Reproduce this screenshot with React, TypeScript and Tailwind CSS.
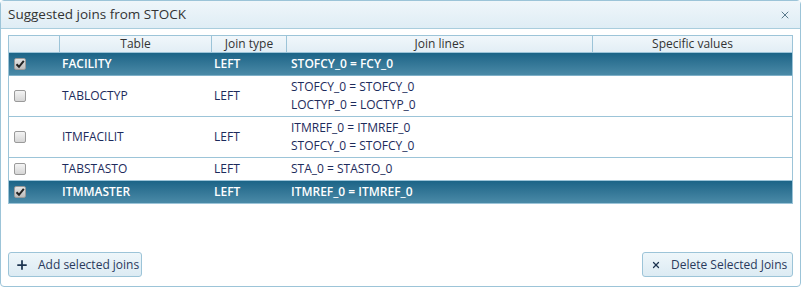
import { Plus, X } from "lucide-react";

type JoinRow = {
	table: string;
	type: string;
	lines: string[];
	selected: boolean;
};

const rows: JoinRow[] = [
	{ table: "FACILITY", type: "LEFT", lines: ["STOFCY_0 = FCY_0"], selected: true },
	{ table: "TABLOCTYP", type: "LEFT", lines: ["STOFCY_0 = STOFCY_0", "LOCTYP_0 = LOCTYP_0"], selected: false },
	{ table: "ITMFACILIT", type: "LEFT", lines: ["ITMREF_0 = ITMREF_0", "STOFCY_0 = STOFCY_0"], selected: false },
	{ table: "TABSTASTO", type: "LEFT", lines: ["STA_0 = STASTO_0"], selected: false },
	{ table: "ITMMASTER", type: "LEFT", lines: ["ITMREF_0 = ITMREF_0"], selected: true }
];

const cols = "grid grid-cols-[51px_152px_75px_306px_1fr]";

function CheckBox({ checked }: { checked: boolean }) {
	return (
		<span
			className={`grid h-3 w-3 place-items-center rounded-[2px] border border-[#9a9a9a] bg-gradient-to-b ${
				checked ? "from-[#e4e4e4] to-[#bdbdbd]" : "from-[#f4f4f4] to-[#d6d6d6]"
			}`}
		>
			{checked ? (
				<svg viewBox="0 0 10 10" className="h-2.5 w-2.5" aria-hidden="true">
					<path d="M1.5 5.2 L4 7.8 L8.8 1.8" fill="none" stroke="#222" strokeWidth="2" />
				</svg>
			) : null}
		</span>
	);
}

export default function App() {
	return (
		<div className="h-[288px] w-[801px] bg-white font-['Open_Sans',sans-serif]">
			<div className="flex h-[287px] flex-col rounded-[4px] border border-[#9cc4d8] bg-white">
				<div className="flex h-[28px] shrink-0 items-center justify-between border-b border-[#a9cddd] bg-gradient-to-b from-[#eff6fa] to-[#dfedf5] pl-[7px] pr-[9px]">
					<span className="text-[13.5px] text-[#333]">Suggested joins from STOCK</span>
					<X className="h-3 w-3 text-[#5a7a8c]" strokeWidth={2} aria-hidden="true" />
				</div>

				<div className="mx-[7px] mt-[6px] border border-[#9cc4d8] text-[12px]">
					<div className={`${cols} h-[17px] border-b border-[#9cc4d8] bg-gradient-to-b from-[#f1f7fb] to-[#e2eef5] text-[#333]`}>
						<div className="border-r border-[#9cc4d8]" />
						<div className="border-r border-[#9cc4d8] text-center leading-[16px]">Table</div>
						<div className="border-r border-[#9cc4d8] text-center leading-[16px]">Join type</div>
						<div className="border-r border-[#9cc4d8] text-center leading-[16px]">Join lines</div>
						<div className="text-center leading-[16px]">Specific values</div>
					</div>
					{rows.map((row, i) => (
						<div
							key={row.table}
							className={`${cols} ${i < rows.length - 1 ? "border-b" : ""} ${
								row.selected
									? "border-[#7fb0c8] bg-gradient-to-b from-[#1b6487] to-[#4a8aa7] font-semibold text-white"
									: "border-[#9cc4d8] bg-white text-[#1d2b5c]"
							}`}
						>
							<div className="flex items-center pl-[5px]">
								<CheckBox checked={row.selected} />
							</div>
							<div className="flex items-center pl-[2px]">{row.table}</div>
							<div className="flex items-center pl-[2px]">{row.type}</div>
							<div className="flex flex-col justify-center py-[2px] pl-[4px] leading-[18px]">
								{row.lines.map((line) => (
									<span key={line}>{line}</span>
								))}
							</div>
							<div />
						</div>
					))}
				</div>

				<div className="mt-auto mb-[9px] flex items-center justify-between px-[7px]">
					<button className="flex h-[25px] w-[134px] items-center gap-[9px] rounded-[3px] border border-[#9cc4d8] bg-gradient-to-b from-[#eef6fa] to-[#dcebf3] pl-[6px] text-[12px] text-[#2a3a5c]">
						<Plus className="h-3.5 w-3.5 text-[#1d3550]" strokeWidth={3} aria-hidden="true" />
						Add selected joins
					</button>
					<button className="flex h-[25px] w-[151px] items-center gap-[10px] rounded-[3px] border border-[#9cc4d8] bg-gradient-to-b from-[#eef6fa] to-[#dcebf3] pl-[8px] text-[12px] text-[#2a3a5c]">
						<X className="h-2.5 w-2.5 text-[#1d3550]" strokeWidth={3} aria-hidden="true" />
						Delete Selected Joins
					</button>
				</div>
			</div>
		</div>
	);
}
